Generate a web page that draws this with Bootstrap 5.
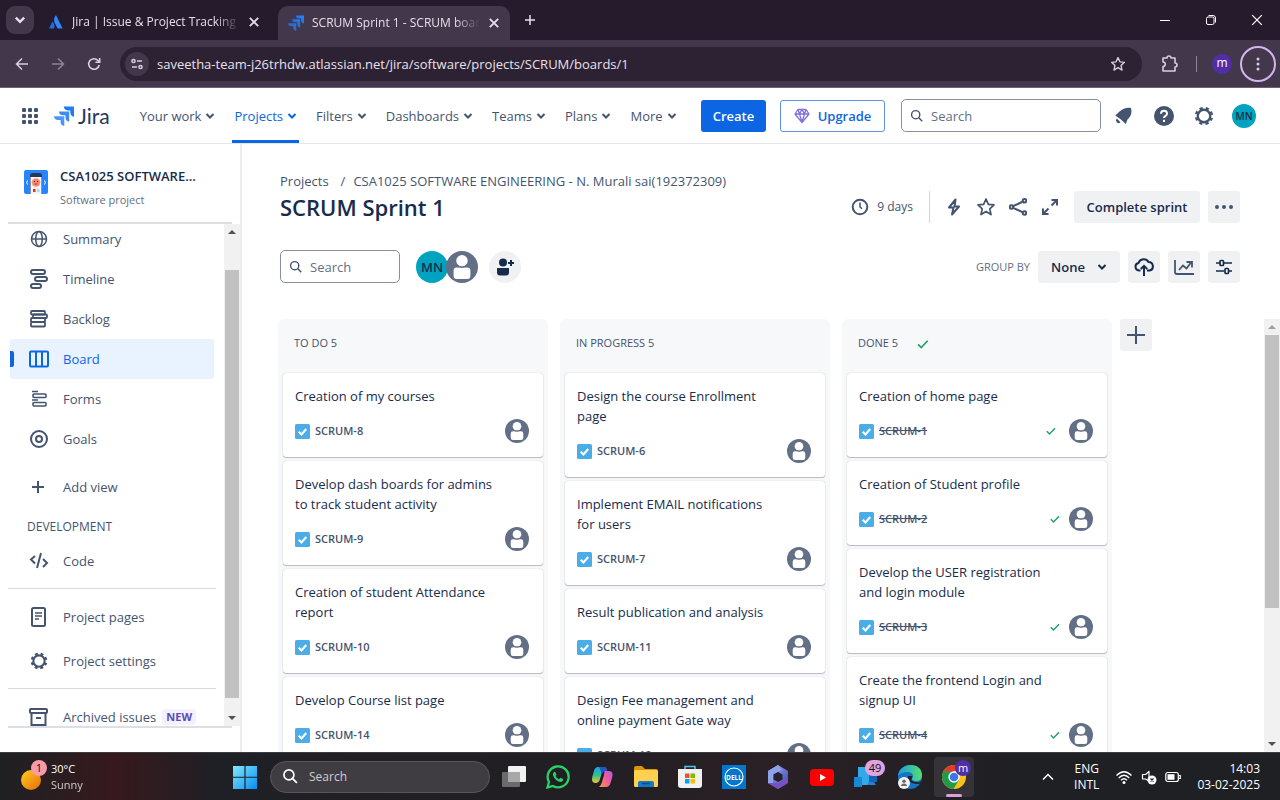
<!DOCTYPE html>
<html lang="en">
<head>
<meta charset="utf-8">
<meta name="viewport" content="width=device-width, initial-scale=1">
<title>SCRUM Sprint 1 - SCRUM board - Jira</title>
<link href="https://cdn.jsdelivr.net/npm/bootstrap@5.3.0/dist/css/bootstrap.min.css" rel="stylesheet">
<style>
  :root { --ink:#172b4d; --slate:#44546f; --blue:#0c66e4; --soft:#f0f1f3; }
  body { font-family:"Open Sans","Noto Sans",sans-serif; font-size:13px; line-height:20px; color:var(--ink); background:#fff; overflow:hidden; }
  svg { display:block; flex:none; fill:none; }
  svg:not([stroke]) { stroke:currentColor; }
  svg:not([stroke-width]) { stroke-width:2; }
  button, .bare { border:0; background:none; padding:0; color:inherit; }
  a { color:inherit; text-decoration:none; }
  .semi { font-weight:600; }
  .slate { color:var(--slate); }
  .fs11 { font-size:11px; } .fs12 { font-size:12px; }

  /* browser chrome */
  .tabstrip { height:40px; background:#251b2c; color:#e6dfea; padding-left:6px; }
  .tab-search { width:28px; height:28px; border-radius:9px; background:#43374b; }
  .btab { width:232px; height:34px; padding:0 10px; gap:8px; }
  .btab.current { background:#43374b; border-radius:10px 10px 0 0; }
  .btab .label { flex:1; min-width:0; overflow:hidden; white-space:nowrap; font-size:12px; -webkit-mask-image:linear-gradient(90deg,#000 85%,transparent); mask-image:linear-gradient(90deg,#000 85%,transparent); }
  .newtab { margin-left:14px; }
  .winbtn { width:46px; height:40px; color:#fff; }
  .toolbar { height:48px; background:#43374b; color:#d8cfdd; padding:0 4px; border-bottom:1px solid #6c6372; }
  .navbtn { width:36px; height:36px; }
  .omnibox { height:34px; border-radius:17px; background:#2c2233; padding:0 16px 0 5px; }
  .omnibox input { font-size:13px; color:#e8e1ec; outline:0; }
  .site { width:24px; height:24px; border-radius:50%; background:#43374b; }
  .profile { width:20px; height:20px; border-radius:50%; background:#512da8; color:#fff; font-size:12px; line-height:18px; }
  .kebab { width:36px; height:36px; border-radius:50%; border:2px solid #d3b5f0; }

  /* product header */
  .jhead { height:56px; border-bottom:1px solid #e4e6ea; padding:0 24px 0 22px; }
  .wordmark { font-family:Lato,"Open Sans",sans-serif; font-size:21px; color:#253858; line-height:24px; }
  .mainnav { gap:19px; padding-left:30px; }
  .mainnav a { height:55px; gap:4px; font-weight:500; color:var(--slate); white-space:nowrap; }
  .mainnav a.active { color:var(--blue); box-shadow:inset 0 -3px var(--blue); margin:0 -2px; padding:0 2px; }
  .box { height:32px; border-radius:3px; font-weight:600; white-space:nowrap; }
  .create { background:var(--blue); color:#fff; width:65px; }
  .upgrade { border:1px solid #5b92de; color:var(--blue); width:105px; gap:8px; margin:0 16px 0 14px; }
  .field { height:33px; border:1px solid #8590a2; border-radius:5px; padding:0 8px; gap:7px; color:var(--slate); background:#fff; }
  .field input, .pill input { width:100%; min-width:0; outline:0; }
  .field input::placeholder { color:#626f86; opacity:1; }
  .wide { width:200px; } .narrow { width:120px; }
  .tools { gap:17px; margin-left:10px; }
  .av { border-radius:50%; background:#00a3bf; color:var(--ink); font-weight:600; width:24px; height:24px; font-size:10px; }

  /* sidebar */
  .side { width:242px; border-right:2px solid #ebecf0; }
  .side-title { height:79px; padding:22px 8px 0 24px; gap:12px; }
  .muted { color:#626f86; }
  .rule2 { height:2px; background:#dcdfe4; width:224px; margin-left:8px; }
  .side-list { margin-top:-5px; }
  .side-list a { height:40px; margin-left:10px; padding-left:19px; gap:14px; width:204px; color:var(--slate); border-radius:3px; }
  .side-list a.active { background:#e9f2ff; color:var(--blue); position:relative; }
  .side-list a.active::before { content:""; position:absolute; left:0; top:12px; width:4px; height:16px; background:var(--blue); border-radius:0 2px 2px 0; }
  .side-list hr { margin:7px 8px 8px 8px; border-top:1px solid #d5d9e0; opacity:1; }
  .group { padding:10px 0 0 27px; }
  .newtag { background:#f3f0ff; color:#5e4db2; font-size:11px; font-weight:700; line-height:16px; padding:0 4px; border-radius:3px; margin-left:-8px; }
  .sbar { width:16px; background:#f1f1f1; color:#505050; }
  .sbar .thumb { background:#c1c1c1; margin:0 1px; }
  .side .thumb { margin-top:30px; }
  .board-thumb { height:63%; }
  .sbar svg { fill:currentColor; stroke:none; margin:4px auto; }

  /* board */
  .content-head { padding:27px 40px 0 38px; }
  h1 { font-size:22px; line-height:32px; font-weight:600; margin:0; color:var(--ink); }
  .soft { background:var(--soft); border-radius:3px; height:32px; font-weight:600; }
  .sq { width:32px; }
  .complete { width:126px; color:var(--ink); }
  .groupby { width:82px; gap:12px; }
  .iconrow button { width:32px; height:32px; display:flex; align-items:center; justify-content:center; }
  .filters { margin:27px 0 36px; }
  .board { padding-left:36px; gap:12px; }
  .lane { flex:0 0 270px; background:#f7f8f9; border-radius:6px 6px 0 0; padding:0 5px; }
  .lane h2 { height:54px; font-size:11px; line-height:16px; font-weight:500; color:#44546f; margin:0; padding:16px 11px 0; gap:18px; }
  .lane h2 svg { margin-top:2px; }
  .addcol { margin-left:-4px; }
  .issue { background:#fff; border-radius:3px; padding:13px 14px 14px 12px; margin-bottom:4px; box-shadow:0 1px 1px #091e4240,0 0 1px #091e424f; }
  .issue p { margin:0 32px 13px 0; }
  .issue .key { font-size:11px; line-height:24px; font-weight:600; color:var(--slate); margin-left:5px; }
  .ok { color:#22a06b; }
  .people .av { width:32px; height:32px; font-size:13px; }
  .people svg { margin-left:-2px; }
  .people { margin-right:11px; }

  /* taskbar */
  .taskbar { height:48px; color:#fff; background:linear-gradient(90deg,#1f2023 0,#36191d 9%,#1f2025 17%,#211f24 45%,#2a2025 60%,#1f2024 80%); border-top:1px solid #3b3b40; font-size:12px; line-height:16px; }
  .weather { width:223px; padding-left:20px; gap:7px; font-size:11px; }
  .app { width:44px; height:40px; }
  .app.open { width:40px; margin:0 2px; background:#353338; border-radius:4px; position:relative; }
  .app.open::after { content:""; position:absolute; bottom:0; left:12px; width:16px; height:3px; border-radius:2px; background:#d9a0dc; }
  .pill { width:220px; height:32px; border-radius:16px; background:#403d42; border:1px solid #57545a; padding:0 11px; gap:10px; margin:0 2px 0 3px; }
  .pill input { color:#fff; }
  .pill input::placeholder { color:#d0cdd2; opacity:1; }
  .bubble { position:absolute; border-radius:9px; background:#e0a3e0; color:#111; font-size:11px; line-height:16px; text-align:center; width:16px; left:21px; top:3px; }
  .bubble.count { width:20px; }
  .bubble.alert-dot { background:#f99aa8; left:11px; top:-3px; }
  .bubble.user { background:#512da8; color:#fff; }
</style>
</head>
<body class="vh-100 d-flex flex-column">

<svg width="0" height="0" class="position-absolute" aria-hidden="true">
  <defs>
    <linearGradient id="jg" x1="1" y1="0" x2="0" y2="1"><stop offset="0" stop-color="#2684ff"/><stop offset="1" stop-color="#1868db"/></linearGradient>
    <linearGradient id="wg" x1="0" y1="0" x2="1" y2="1"><stop offset="0" stop-color="#7fe9ff"/><stop offset="1" stop-color="#0a8cf0"/></linearGradient>
    <linearGradient id="sg" x1="0" y1="0" x2="1" y2="1"><stop offset="0" stop-color="#ffcf1f"/><stop offset="1" stop-color="#e86a0a"/></linearGradient>
    <linearGradient id="cg1" x1="0" y1="0" x2="0" y2="1"><stop offset="0" stop-color="#1fa0f0"/><stop offset=".5" stop-color="#2fbf8f"/><stop offset="1" stop-color="#f2c72e"/></linearGradient>
    <linearGradient id="cg2" x1="1" y1="0" x2="0" y2="1"><stop offset="0" stop-color="#a35bf0"/><stop offset=".5" stop-color="#ef5aa0"/><stop offset="1" stop-color="#ff9a3c"/></linearGradient>
    <linearGradient id="og" x1="0" y1="0" x2="1" y2="1"><stop offset="0" stop-color="#b9a4f5"/><stop offset="1" stop-color="#2b4bb0"/></linearGradient>
    <linearGradient id="eg" x1="0" y1="0" x2="1" y2="0"><stop offset="0" stop-color="#1b9de2"/><stop offset="1" stop-color="#56dd6c"/></linearGradient>
    <symbol id="chev" viewBox="0 0 10 10"><path d="M1.500 3 5 6.500 8.500 3"/></symbol>
    <symbol id="close" viewBox="0 0 10 10"><path d="M1.500 1.500l7 7M8.500 1.500l-7 7" stroke-width="1.500"/></symbol>
    <symbol id="jira" viewBox="0 0 20 20"><g stroke="none" fill="url(#jg)"><path d="M9.800.5H20v10.200c-2.300-.3-3.700-1.800-3.700-4.100V4.400h-2.400C11.300 4.400 9.900 2.800 9.800.5z"/><path d="M5 5.400h10.200v10.200c-2.300-.3-3.700-1.800-3.700-4.100V9.200H9.100C6.500 9.200 5.100 7.700 5 5.400z" opacity=".88"/><path d="M0 10.200h10.300V20c-2.300-.3-3.700-1.700-3.700-4v-2H4.200C1.600 14 .1 12.500 0 10.200z" opacity=".8"/></g></symbol>
    <symbol id="search" viewBox="0 0 16 16"><circle cx="6.500" cy="6.500" r="4.700" stroke-width="1.600"/><path d="M10 10l4 4" stroke-width="1.600"/></symbol>
    <symbol id="star" viewBox="0 0 20 20"><path d="M10 2l2.400 5.300 5.600.6-4.200 3.900 1.200 5.800-5-3-5 3 1.200-5.800L2 7.900l5.600-.6z" stroke-linejoin="round" stroke-width="1.700"/></symbol>
    <symbol id="gear" viewBox="0 0 24 24"><g><circle cx="12" cy="12" r="6.800" stroke-width="2.500"/><circle cx="12" cy="12" r="8.700" stroke-width="2.600" stroke-dasharray="3.600 3.233" stroke-dashoffset="1.800" transform="rotate(22.500 12 12)"/></g></symbol>
    <symbol id="person" viewBox="0 0 24 24"><g stroke="none"><circle cx="12" cy="12" r="12" fill="#626f86"/><circle cx="12" cy="7.300" r="4.300" fill="#fff"/><path d="M5.700 14.700q0-2.400 2.400-2.400h7.800q2.400 0 2.400 2.400v3.800q0 2.500-2.400 2.500H8.100q-2.400 0-2.400-2.500z" fill="#fff"/><path d="M7.500 10.300q4.500 4 9 0" stroke="#626f86" stroke-width="1"/></g></symbol>
    <symbol id="task" viewBox="0 0 14 14"><g><rect width="14" height="14" rx="1.500" fill="#4bade8" stroke="none"/><path d="M3.500 7.200 6 9.700l4.500-5" stroke="#fff"/></g></symbol>
    <symbol id="tick" viewBox="0 0 12 12"><path d="M1.800 6.300 4.500 9l5.500-5.800" stroke-width="1.500"/></symbol>
    <symbol id="up" viewBox="0 0 8 8"><path d="M0 6l4-4 4 4z"/></symbol>
    <symbol id="down" viewBox="0 0 8 8"><path d="M0 2l4 4 4-4z"/></symbol>
  </defs>
</svg>

<header>
  <div class="tabstrip d-flex align-items-center">
    <button class="tab-search d-flex align-items-center justify-content-center" aria-label="Search tabs"><svg width="12" height="12"><use href="#chev"/></svg></button>
    <div class="btab d-flex align-items-center ms-1 mt-1">
      <svg width="16" height="16" viewBox="0 0 16 16" stroke="none"><path d="M4.500 7.500 1 14.500h5c1-2.400.4-5.300-1.500-7z" fill="#1d6fe8"/><path d="M7.500 1.500c-2 3-1.700 5.500-.6 7.700l2.700 5.300h5L8.200 1.600z" fill="#2f86ff"/></svg>
      <span class="label">Jira | Issue &amp; Project Tracking Software</span>
      <button aria-label="Close tab"><svg width="12" height="12"><use href="#close"/></svg></button>
    </div>
    <div class="btab current d-flex align-items-center ms-2 align-self-end">
      <svg width="16" height="16"><use href="#jira"/></svg>
      <span class="label">SCRUM Sprint 1 - SCRUM board - Jira</span>
      <button aria-label="Close tab"><svg width="12" height="12"><use href="#close"/></svg></button>
    </div>
    <button class="newtab" aria-label="New tab"><svg width="12" height="12" viewBox="0 0 12 12" stroke-width="1.500"><path d="M6 1v10M1 6h10"/></svg></button>
    <div class="ms-auto d-flex">
      <button class="winbtn d-flex align-items-center justify-content-center" aria-label="Minimise"><svg width="10" height="10" stroke-width="1"><path d="M0 5.500h10"/></svg></button>
      <button class="winbtn d-flex align-items-center justify-content-center" aria-label="Restore"><svg width="10" height="10" viewBox="0 0 10 10" stroke-width="1"><rect x=".5" y="2" width="7.500" height="7.500" rx="1.500"/><path d="M2.500.5H7A2.500 2.500 0 0 1 9.500 3v4.500"/></svg></button>
      <button class="winbtn d-flex align-items-center justify-content-center" aria-label="Close"><svg width="12" height="12" viewBox="0 0 10 10" stroke-width="1"><path d="M1 1l8 8M9 1l-8 8"/></svg></button>
    </div>
  </div>
  <div class="toolbar d-flex align-items-center">
    <button class="navbtn d-flex align-items-center justify-content-center" aria-label="Back"><svg width="14" height="14" viewBox="0 0 14 14" stroke-width="1.500"><path d="M13 7H2M7 1.500 1.500 7 7 12.500"/></svg></button>
    <button class="navbtn d-flex align-items-center justify-content-center opacity-50" aria-label="Forward"><svg width="14" height="14" viewBox="0 0 14 14" stroke-width="1.500"><path d="M1 7h11M7 1.500 12.500 7 7 12.500"/></svg></button>
    <button class="navbtn d-flex align-items-center justify-content-center" aria-label="Reload"><svg width="14" height="14" viewBox="0 0 14 14" stroke-width="1.600"><path d="M12.200 8A5.300 5.300 0 1 1 11 3.500L12.500 5M12.700 1v4.300H8.400"/></svg></button>
    <div class="omnibox flex-grow-1 d-flex align-items-center ms-2">
      <span class="site d-flex align-items-center justify-content-center"><svg width="14" height="14" viewBox="0 0 14 14" stroke-width="1.500"><circle cx="3.500" cy="4" r="1.600"/><path d="M7 4h5M2 10h5"/><circle cx="10.500" cy="10" r="1.600"/></svg></span>
      <input class="bare flex-grow-1 ms-2" aria-label="Address" value="saveetha-team-j26trhdw.atlassian.net/jira/software/projects/SCRUM/boards/1">
      <svg width="16" height="16"><use href="#star"/></svg>
    </div>
    <svg class="ms-3" width="22" height="20" viewBox="0 0 22 20" stroke-width="1.600"><path d="M5 4h4a2 2 0 0 1 4 0h4v5a2 2 0 0 1 0 4v4H5v-4.500a2.200 2.200 0 0 0 0-4.500z" stroke-linejoin="round"/></svg>
    <svg class="ms-2 opacity-50" width="16" height="18" stroke-width="1"><path d="M8.500 1v16"/></svg>
    <span class="profile text-center ms-2">m</span>
    <button class="kebab d-flex align-items-center justify-content-center ms-2" aria-label="Menu"><svg width="4" height="16" stroke="none"><g fill="#d8cfdd"><circle cx="2" cy="3" r="1.500"/><circle cx="2" cy="8" r="1.500"/><circle cx="2" cy="13" r="1.500"/></g></svg></button>
  </div>
</header>

<div class="jhead d-flex align-items-center slate">
  <button aria-label="Switch to"><svg width="16" height="16" viewBox="0 0 16 16" stroke="none"><g fill="#44546f"><rect width="4" height="4" rx="1"/><rect x="6" width="4" height="4" rx="1"/><rect x="12" width="4" height="4" rx="1"/><rect y="6" width="4" height="4" rx="1"/><rect x="6" y="6" width="4" height="4" rx="1"/><rect x="12" y="6" width="4" height="4" rx="1"/><rect y="12" width="4" height="4" rx="1"/><rect x="6" y="12" width="4" height="4" rx="1"/><rect x="12" y="12" width="4" height="4" rx="1"/></g></svg></button>
  <a href="#" class="d-flex align-items-center gap-1 ms-3"><svg width="20" height="20"><use href="#jira"/></svg><span class="wordmark">Jira</span></a>
  <nav class="mainnav d-flex" aria-label="Primary">
    <a href="#" class="d-flex align-items-center">Your work <svg width="10" height="10"><use href="#chev"/></svg></a>
    <a href="#" class="active d-flex align-items-center">Projects <svg width="10" height="10"><use href="#chev"/></svg></a>
    <a href="#" class="d-flex align-items-center">Filters <svg width="10" height="10"><use href="#chev"/></svg></a>
    <a href="#" class="d-flex align-items-center">Dashboards <svg width="10" height="10"><use href="#chev"/></svg></a>
    <a href="#" class="d-flex align-items-center">Teams <svg width="10" height="10"><use href="#chev"/></svg></a>
    <a href="#" class="d-flex align-items-center">Plans <svg width="10" height="10"><use href="#chev"/></svg></a>
    <a href="#" class="d-flex align-items-center">More <svg width="10" height="10"><use href="#chev"/></svg></a>
  </nav>
  <div class="d-flex align-items-center ms-auto">
    <button class="box create">Create</button>
    <button class="box upgrade d-flex align-items-center justify-content-center"><svg width="16" height="16" viewBox="0 0 16 16" stroke="#8270db" stroke-width="1.300"><path d="M4 1.500h8L15 6l-7 8.500L1 6zM1 6h14M4 1.500 5.500 6 8 14l2.500-8L12 1.500M5.500 6 8 1.500 10.500 6" stroke-linejoin="round"/></svg>Upgrade</button>
    <label class="field wide d-flex align-items-center"><svg width="14" height="14"><use href="#search"/></svg><input class="bare" type="search" placeholder="Search" aria-label="Search"></label>
    <div class="tools d-flex align-items-center">
      <button aria-label="Notifications"><svg width="24" height="24" viewBox="0 0 24 24" stroke="none"><path d="M20 4c1 4 .5 8-3.500 11.500L14.800 20 9.300 15 4.300 11.500l4.200-4C12 4.500 16 3 20 4zM5.800 14.500l3.700 3.700a2.600 2.600 0 0 1-3.700-3.700z" fill="#44546f"/></svg></button>
      <button aria-label="Help"><svg width="24" height="24" viewBox="0 0 24 24"><circle cx="12" cy="12" r="10" fill="#44546f" stroke="none"/><path d="M9 9.700c0-4 6-4 6 0 0 2.300-3 2-3 4.300M12 15.700v2.300" stroke="#fff"/></svg></button>
      <button aria-label="Settings"><svg width="22" height="22"><use href="#gear"/></svg></button>
      <button class="av" aria-label="Your profile">MN</button>
    </div>
  </div>
</div>

<div class="d-flex flex-grow-1 overflow-hidden">
  <aside class="side flex-shrink-0 d-flex flex-column pb-4">
    <div class="side-title d-flex">
      <svg class="mt-1" width="24" height="24" viewBox="0 0 24 24" stroke="none"><rect width="24" height="24" rx="2" fill="#2684ff"/><path d="M6 24V6q0-3 3-3h6q3 0 3 3v18z" fill="#253858"/><path d="M6.500 7h11v17h-11z" fill="#f4f5f7"/><circle cx="12" cy="12.500" r="4.300" fill="#ff8f73"/><circle cx="10.500" cy="11.500" r=".7" fill="#253858"/><circle cx="13.500" cy="11.500" r=".7" fill="#253858"/><path d="M10.500 14h3" stroke="#bf2600" stroke-width="1"/><path d="M9 19h2.500v3H9z" fill="#de350b"/><path d="M13 19h2.500v3H13z" fill="#b3d4ff"/><path d="M3.500 10.500q-1.500 2 0 4M20.500 10.500q1.500 2 0 4" stroke="#fff" stroke-width="1"/></svg>
      <div><div class="semi">CSA1025 SOFTWARE...</div><div class="fs11 mt-1 muted">Software project</div></div>
    </div>
    <div class="rule2"></div>
    <div class="d-flex flex-grow-1 overflow-hidden">
      <nav class="flex-grow-1 overflow-hidden" aria-label="Project">
        <div class="side-list">
          <a href="#" class="d-flex align-items-center"><svg width="20" height="20" viewBox="0 0 20 20" stroke-width="1.500"><circle cx="10" cy="10" r="7.500"/><ellipse cx="10" cy="10" rx="3.300" ry="7.500"/><path d="M2.500 10h15"/></svg>Summary</a>
          <a href="#" class="d-flex align-items-center"><svg width="20" height="20" viewBox="0 0 20 20"><rect x="2" y="1" width="14" height="4" rx="2"/><rect x="6" y="8" width="12" height="4" rx="2"/><rect x="2" y="15" width="10" height="4" rx="2"/></svg>Timeline</a>
          <a href="#" class="d-flex align-items-center"><svg width="20" height="20" viewBox="0 0 20 20" stroke-width="1.800"><rect x="2" y="2" width="14" height="3.500" rx="1"/><rect x="4" y="5.500" width="14" height="3.500" rx="1"/><rect x="2" y="9" width="14" height="4" rx="1"/><rect x="2" y="13" width="14" height="4.500" rx="1"/></svg>Backlog</a>
          <a href="#" class="active d-flex align-items-center" aria-current="page"><svg width="20" height="20" viewBox="0 0 20 20"><rect x="1" y="2.500" width="18" height="15" rx="1"/><path d="M7 3v14M13 3v14"/></svg>Board</a>
          <a href="#" class="d-flex align-items-center"><svg width="20" height="20" viewBox="0 0 20 20" stroke-width="1.600"><path d="M3 2.500h6M3 11h6"/><rect x="4" y="5" width="13" height="3.500" rx="1"/><rect x="4" y="13.500" width="13" height="3.500" rx="1"/></svg>Forms</a>
          <a href="#" class="d-flex align-items-center"><svg width="20" height="20" viewBox="0 0 20 20"><circle cx="10" cy="10" r="8"/><circle cx="10" cy="10" r="3"/></svg>Goals</a>
          <a href="#" class="d-flex align-items-center mt-2"><svg width="20" height="20" viewBox="0 0 20 20"><path d="M9 4v12M3 10h12"/></svg>Add view</a>
          <div class="group fs12 slate fw-medium">DEVELOPMENT</div>
          <a href="#" class="d-flex align-items-center mt-1"><svg width="20" height="20" viewBox="0 0 20 20"><path d="M6 5 2 8.500l4 4M14 8l4 4-4 4M12 2 8 17"/></svg>Code</a>
          <hr>
          <a href="#" class="d-flex align-items-center"><svg width="20" height="20" viewBox="0 0 20 20"><rect x="3" y="1" width="13" height="18" rx="1.500"/><path d="M6 6h7M6 9h7M6 12h4" stroke-width="1.500"/></svg>Project pages</a>
          <a href="#" class="d-flex align-items-center mt-1"><svg width="20" height="20"><use href="#gear"/></svg>Project settings</a>
          <hr>
          <a href="#" class="d-flex align-items-center"><svg width="20" height="20" viewBox="0 0 20 20"><rect x="1" y="2" width="17" height="4" rx="1"/><path d="M2.500 6v12h14V6M7 11h5"/></svg>Archived issues <span class="newtag">NEW</span></a>
        </div>
      </nav>
      <div class="sbar d-flex flex-column"><svg width="8" height="8"><use href="#up"/></svg><div class="thumb flex-grow-1"></div><svg class="mt-3" width="8" height="8"><use href="#down"/></svg></div>
    </div>
    <div class="rule2"></div>
  </aside>

  <main class="flex-grow-1 d-flex flex-column overflow-hidden">
    <div class="content-head">
      <nav class="slate" aria-label="Breadcrumb"><a href="#">Projects</a><span class="px-2 ms-1">/</span><a href="#">CSA1025 SOFTWARE ENGINEERING - N. Murali sai(192372309)</a></nav>
      <div class="d-flex align-items-center justify-content-between slate">
        <h1>SCRUM Sprint 1</h1>
        <div class="d-flex align-items-center gap-2">
          <svg width="18" height="18" viewBox="0 0 18 18"><circle cx="9" cy="9" r="7.300"/><path d="M9 4.500V9l2 1.700" stroke-width="1.500"/></svg><span class="fs12">9 days</span>
          <div class="vr ms-2 opacity-25"></div>
          <div class="iconrow d-flex">
            <button aria-label="Automation"><svg width="16" height="20" viewBox="0 0 16 20"><path d="M9.500 2.500 3 10.500h4.500L6 17.500l7-8H8.500z" stroke-linejoin="round"/></svg></button>
            <button aria-label="Star"><svg width="20" height="20"><use href="#star"/></svg></button>
            <button aria-label="Share"><svg width="18" height="18" viewBox="0 0 18 18"><circle cx="2.500" cy="9" r="1.800"/><circle cx="15.500" cy="2.800" r="1.800"/><circle cx="15.500" cy="15" r="1.800"/><path d="M4 8.200 14 3.500M4 9.800l10 4.500"/></svg></button>
            <button aria-label="Full screen"><svg width="16" height="16" viewBox="0 0 16 16"><path d="M9.500 1H15v5.500M15 1 9.500 6.500M1 9.500V15h5.500M1 15l5.500-5.500"/></svg></button>
          </div>
          <button class="soft complete">Complete sprint</button>
          <button class="soft sq d-flex align-items-center justify-content-center" aria-label="More"><svg width="20" height="6" viewBox="0 0 20 6" stroke="none"><g fill="#44546f"><circle cx="3" cy="3" r="2"/><circle cx="10" cy="3" r="2"/><circle cx="17" cy="3" r="2"/></g></svg></button>
        </div>
      </div>
      <div class="filters d-flex align-items-center justify-content-between">
        <div class="d-flex align-items-center">
          <label class="field narrow d-flex align-items-center"><svg width="14" height="14"><use href="#search"/></svg><input class="bare" type="search" placeholder="Search" aria-label="Search board"></label>
          <div class="people d-flex ps-3"><button class="av">MN</button><svg width="32" height="32"><use href="#person"/></svg></div>
          <button class="soft sq rounded-circle d-flex align-items-center justify-content-center" aria-label="Add people"><svg width="20" height="20" viewBox="0 0 20 20"><circle cx="8" cy="5.500" r="4" fill="#172b4d" stroke="none"/><path d="M2 11h12v4.500q0 3-3 3H5q-3 0-3-3z" fill="#172b4d" stroke="none"/><path d="M16 3v6M13 6h6" stroke="#172b4d"/></svg></button>
        </div>
        <div class="d-flex align-items-center gap-2">
          <span class="fs11 muted">GROUP BY</span>
          <button class="soft groupby d-flex align-items-center justify-content-center">None <svg width="10" height="10"><use href="#chev"/></svg></button>
          <button class="soft sq d-flex align-items-center justify-content-center" aria-label="Import"><svg width="20" height="18" viewBox="0 0 20 18"><path d="M6.500 12.500H5A3.800 3.800 0 0 1 4.500 5 5.500 5.500 0 0 1 14.500 4a4.300 4.300 0 0 1 1 8.500H13M10 18V8.500M6.800 11 10 7.800l3.200 3.200"/></svg></button>
          <button class="soft sq d-flex align-items-center justify-content-center slate" aria-label="Insights"><svg width="20" height="16" viewBox="0 0 20 16"><path d="M1 1v12q0 2 2 2h17M5 11l4-4.500 3.500 3L17 3.500M12.500 3H18v5.500" stroke-width="1.800"/></svg></button>
          <button class="soft sq d-flex align-items-center justify-content-center" aria-label="View settings"><svg width="18" height="16" viewBox="0 0 18 16" stroke-width="1.700"><path d="M1 4h4M9 4h8M1 12h8M13 12h4"/><rect x="5" y="1.500" width="3.500" height="5" rx="1"/><rect x="10" y="9.500" width="3.500" height="5" rx="1"/></svg></button>
        </div>
      </div>
    </div>

    <div class="d-flex flex-grow-1 overflow-hidden">
      <div class="board d-flex flex-grow-1 overflow-hidden">
        <section class="lane">
          <h2>TO DO 5</h2>
          <div class="issue"><p>Creation of my courses</p><div class="d-flex align-items-center"><svg width="15" height="15"><use href="#task"/></svg><a href="#" class="key">SCRUM-8</a><svg class="ms-auto" width="24" height="24"><use href="#person"/></svg></div></div>
          <div class="issue"><p>Develop dash boards for admins to track student activity</p><div class="d-flex align-items-center"><svg width="15" height="15"><use href="#task"/></svg><a href="#" class="key">SCRUM-9</a><svg class="ms-auto" width="24" height="24"><use href="#person"/></svg></div></div>
          <div class="issue"><p>Creation of student Attendance report</p><div class="d-flex align-items-center"><svg width="15" height="15"><use href="#task"/></svg><a href="#" class="key">SCRUM-10</a><svg class="ms-auto" width="24" height="24"><use href="#person"/></svg></div></div>
          <div class="issue"><p>Develop Course list page</p><div class="d-flex align-items-center"><svg width="15" height="15"><use href="#task"/></svg><a href="#" class="key">SCRUM-14</a><svg class="ms-auto" width="24" height="24"><use href="#person"/></svg></div></div>
        </section>
        <section class="lane">
          <h2>IN PROGRESS 5</h2>
          <div class="issue"><p>Design the course Enrollment page</p><div class="d-flex align-items-center"><svg width="15" height="15"><use href="#task"/></svg><a href="#" class="key">SCRUM-6</a><svg class="ms-auto" width="24" height="24"><use href="#person"/></svg></div></div>
          <div class="issue"><p>Implement EMAIL notifications for users</p><div class="d-flex align-items-center"><svg width="15" height="15"><use href="#task"/></svg><a href="#" class="key">SCRUM-7</a><svg class="ms-auto" width="24" height="24"><use href="#person"/></svg></div></div>
          <div class="issue"><p>Result publication and analysis</p><div class="d-flex align-items-center"><svg width="15" height="15"><use href="#task"/></svg><a href="#" class="key">SCRUM-11</a><svg class="ms-auto" width="24" height="24"><use href="#person"/></svg></div></div>
          <div class="issue"><p>Design Fee management and online payment Gate way</p><div class="d-flex align-items-center"><svg width="15" height="15"><use href="#task"/></svg><a href="#" class="key">SCRUM-12</a><svg class="ms-auto" width="24" height="24"><use href="#person"/></svg></div></div>
        </section>
        <section class="lane">
          <h2 class="d-flex">DONE 5 <svg class="ok" width="14" height="14"><use href="#tick"/></svg></h2>
          <div class="issue"><p>Creation of home page</p><div class="d-flex align-items-center"><svg width="15" height="15"><use href="#task"/></svg><a href="#" class="key text-decoration-line-through">SCRUM-1</a><svg class="ok ms-auto me-2" width="12" height="12"><use href="#tick"/></svg><svg class="ms-1" width="24" height="24"><use href="#person"/></svg></div></div>
          <div class="issue"><p>Creation of Student profile</p><div class="d-flex align-items-center"><svg width="15" height="15"><use href="#task"/></svg><a href="#" class="key text-decoration-line-through">SCRUM-2</a><svg class="ok ms-auto me-2" width="12" height="12"><use href="#tick"/></svg><svg width="24" height="24"><use href="#person"/></svg></div></div>
          <div class="issue"><p>Develop the USER registration and login module</p><div class="d-flex align-items-center"><svg width="15" height="15"><use href="#task"/></svg><a href="#" class="key text-decoration-line-through">SCRUM-3</a><svg class="ok ms-auto me-2" width="12" height="12"><use href="#tick"/></svg><svg width="24" height="24"><use href="#person"/></svg></div></div>
          <div class="issue"><p>Create the frontend Login and signup UI</p><div class="d-flex align-items-center"><svg width="15" height="15"><use href="#task"/></svg><a href="#" class="key text-decoration-line-through">SCRUM-4</a><svg class="ok ms-auto me-2" width="12" height="12"><use href="#tick"/></svg><svg width="24" height="24"><use href="#person"/></svg></div></div>
        </section>
        <button class="soft sq addcol d-flex align-items-center justify-content-center slate" aria-label="Create column"><svg width="18" height="18"><path d="M9 0v18M0 9h18"/></svg></button>
      </div>
      <div class="sbar d-flex flex-column"><svg class="opacity-50" width="8" height="8"><use href="#up"/></svg><div class="thumb board-thumb"></div><svg class="mt-auto" width="8" height="8"><use href="#down"/></svg></div>
    </div>
  </main>
</div>

<footer class="taskbar d-flex align-items-center flex-shrink-0">
  <div class="weather d-flex align-items-center">
    <span class="position-relative"><svg width="24" height="28" viewBox="0 0 24 28" stroke="none"><circle cx="11" cy="17" r="10" fill="url(#sg)"/></svg><span class="bubble alert-dot">1</span></span>
    <span>30°C<br><span class="opacity-75">Sunny</span></span>
  </div>
  <button class="app d-flex align-items-center justify-content-center" aria-label="Start"><svg width="24" height="24" viewBox="0 0 24 24" stroke="none"><path d="M0 1h11.400v10.700H0zM12.600 1H24v10.700H12.600zM0 12.800h11.400V24H0zM12.600 12.800H24V24H12.600z" fill="url(#wg)"/></svg></button>
  <label class="pill d-flex align-items-center"><svg width="17" height="17"><use href="#search"/></svg><input class="bare" type="search" placeholder="Search" aria-label="Taskbar search"></label>
  <button class="app d-flex align-items-center justify-content-center" aria-label="Task view"><svg width="24" height="24" viewBox="0 0 24 24" stroke="none"><rect y="7" width="18" height="15" rx="1" fill="#6b6b6b"/><rect x="6" y="1" width="18" height="16" rx="1" fill="#f2f2f2"/><path d="M6 7h12v10H6z" fill="#a8a8a8"/></svg></button>
  <button class="app d-flex align-items-center justify-content-center" aria-label="WhatsApp"><svg width="24" height="24" viewBox="0 0 24 24" stroke="#25d366"><path d="M1.500 22.500 3 17A10.500 10.500 0 1 1 7 21z" stroke-width="2.300"/><path d="M7.500 7.500q1-1.500 2 0l1 2-1 1.500q1.200 2.200 3.500 3.200l1.500-1.400 2.500 1.200q.5 2.500-2.500 3-5-.6-7.500-6.500-.2-1.800.5-3z" fill="#25d366" stroke="none"/></svg></button>
  <button class="app d-flex align-items-center justify-content-center" aria-label="Copilot"><svg width="24" height="24" viewBox="0 0 24 24" stroke="none"><path d="M8 2h7q-2 1-3 5l-2 7q-1 4-4.500 4-5 0-3-7l1.500-5Q5 2 8 2z" fill="url(#cg1)"/><path d="M14 2q2.500 0 3 4h2q5 0 3 7l-1.500 5q-1 4-4.500 4H9q2-1 3-5l2-7q1-4 0-8z" fill="url(#cg2)"/><path d="M9 2h5.500q2 0 2.500 4h-2q-2 0-3 3z" fill="#2256c9"/></svg></button>
  <button class="app d-flex align-items-center justify-content-center" aria-label="File Explorer"><svg width="24" height="24" viewBox="0 0 24 24" stroke="none"><path d="M0 3q0-2 2-2h6l3 3H22q2 0 2 2v5H0z" fill="#d9960c"/><rect y="5" width="24" height="17" rx="1.500" fill="#ffd14f"/><path d="M4 22v-4q0-2 2-2h12q2 0 2 2v4z" fill="#1479c9"/><path d="M8 18.500h8" stroke="#0a4a86" stroke-width="1.500"/></svg></button>
  <button class="app d-flex align-items-center justify-content-center" aria-label="Store"><svg width="24" height="24" viewBox="0 0 24 24"><path d="M7 5V1.500h10V5" stroke="#4fc3f0" stroke-width="1.500"/><path d="M0 4h24v16q0 3-3 3H3q-3 0-3-3z" fill="#f1f1f1" stroke="none"/><g stroke="none"><path d="M7 8.500h4.500V13H7z" fill="#f25022"/><path d="M12.500 8.500H17V13h-4.500z" fill="#7fba00"/><path d="M7 14h4.500v4.500H7z" fill="#00a4ef"/><path d="M12.500 14H17v4.500h-4.500z" fill="#ffb900"/></g></svg></button>
  <button class="app d-flex align-items-center justify-content-center" aria-label="Dell"><svg width="24" height="24" viewBox="0 0 24 24"><path d="M0 0h24v24H0z" fill="#0076ce" stroke="none"/><circle cx="12" cy="12" r="9" stroke="#fff" stroke-width="1.200"/><text x="12" y="14.500" font-size="6.500" font-weight="700" text-anchor="middle" fill="#fff" stroke="none">DELL</text></svg></button>
  <button class="app d-flex align-items-center justify-content-center" aria-label="Microsoft 365"><svg width="24" height="24" viewBox="0 0 24 24" stroke="none"><path d="M12 0l10 6v12l-10 6L2 18V6z" fill="url(#og)"/><path d="M12 0 2 6v12l5 2V9l9-4z" fill="#8ea2ea"/><path d="M2 18l10 6 10-6v-5l-9 5z" fill="#7b4fc4"/><path d="M12 7l4.500 2.500v5L12 17l-4.500-2.500v-5z" fill="#28202a"/></svg></button>
  <button class="app d-flex align-items-center justify-content-center" aria-label="YouTube"><svg width="24" height="24" viewBox="0 0 24 24" stroke="none"><rect y="4" width="24" height="17" rx="4" fill="#f00"/><path d="M10 9v7l6-3.500z" fill="#fff"/></svg></button>
  <button class="app d-flex align-items-center justify-content-center position-relative" aria-label="Phone Link"><svg width="24" height="24" viewBox="0 0 24 24" stroke="none"><path d="M8 6h15v11H8z" fill="#1464b8"/><path d="M4 2h11v18H4z" fill="#35a8ea"/><path d="M0 12h8v10H0z" fill="#1987d4"/><path d="M15 17h5l2 3h-9z" fill="#1987d4"/></svg><span class="bubble count">49</span></button>
  <button class="app d-flex align-items-center justify-content-center" aria-label="Edge"><svg width="24" height="24" viewBox="0 0 24 24" stroke="none"><circle cx="12" cy="12" r="12" fill="#1574c4"/><path d="M0 11C1-3 24-4 24 10q0 6-6 6-4 0-4-2.500 1-1 1-2.500 0-4-6-4-6 0-9 4z" fill="url(#eg)"/><path d="M10 11q-1 8 11 8 2-1 2.500-3-1 0-2 1-5 1-8-1.500 0-3 1-4.500z" fill="#252025"/><circle cx="6" cy="18" r="6" fill="#f4f4f4"/><circle cx="6" cy="16.300" r="1.800" fill="#6b6b6b"/><path d="M3 21q0-2.500 3-2.500t3 2.500z" fill="#6b6b6b"/></svg></button>
  <button class="app open d-flex align-items-center justify-content-center" aria-label="Chrome"><svg width="24" height="24" viewBox="0 0 24 24" stroke="none"><circle cx="12" cy="12" r="12" fill="#fbc116"/><path d="M12 12 1.600 6A12 12 0 0 1 22.400 6H12z" fill="#e33b2e"/><path d="M1.600 6A12 12 0 0 0 11.500 24L17 15l-5-3z" fill="#229a46"/><path d="M1.600 6 7 15l3-8z" fill="#229a46"/><circle cx="12" cy="12" r="5.700" fill="#fff"/><circle cx="12" cy="12" r="4.300" fill="#3b78e7"/></svg><span class="bubble user">m</span></button>
  <div class="d-flex align-items-center ms-auto pe-3 me-1">
    <button aria-label="Hidden icons"><svg width="12" height="8" viewBox="0 0 12 8" stroke-width="1.500"><path d="M1 6.500l5-5 5 5"/></svg></button>
    <span class="text-center ms-3 ps-1">ENG<br>INTL</span>
    <svg class="ms-3" width="18" height="16" viewBox="0 0 18 16" stroke-width="1.300"><path d="M1.500 6.500Q9-1 16.500 6.500M3.700 9Q9 3.500 14.300 9M6 11.300q3-3 6 0"/><circle cx="9" cy="13.500" r="1.500" fill="#fff" stroke="none"/></svg>
    <svg class="ms-2" width="16" height="16" viewBox="0 0 16 16" stroke-width="1.200"><path d="M8 3v9L4.500 10H1.500V5.500h3L8 2.500z" stroke-linejoin="round"/><circle cx="11" cy="11" r="4.500" fill="#fff" stroke="none"/><path d="M9.500 9.500l3 3M12.500 9.500l-3 3" stroke="#222"/></svg>
    <svg class="ms-2" width="16" height="12" viewBox="0 0 16 12" stroke-width="1.200"><rect x=".8" y="1.500" width="12.500" height="9" rx="2"/><path d="M14 4.500h1.300v3H14"/><path d="M2.500 3.200h7v5.600h-7z" fill="#fff" stroke="none"/></svg>
    <span class="text-end ms-3">14:03<br>03-02-2025</span>
  </div>
</footer>

<script src="https://cdn.jsdelivr.net/npm/bootstrap@5.3.0/dist/js/bootstrap.bundle.min.js"></script>
</body>
</html>
